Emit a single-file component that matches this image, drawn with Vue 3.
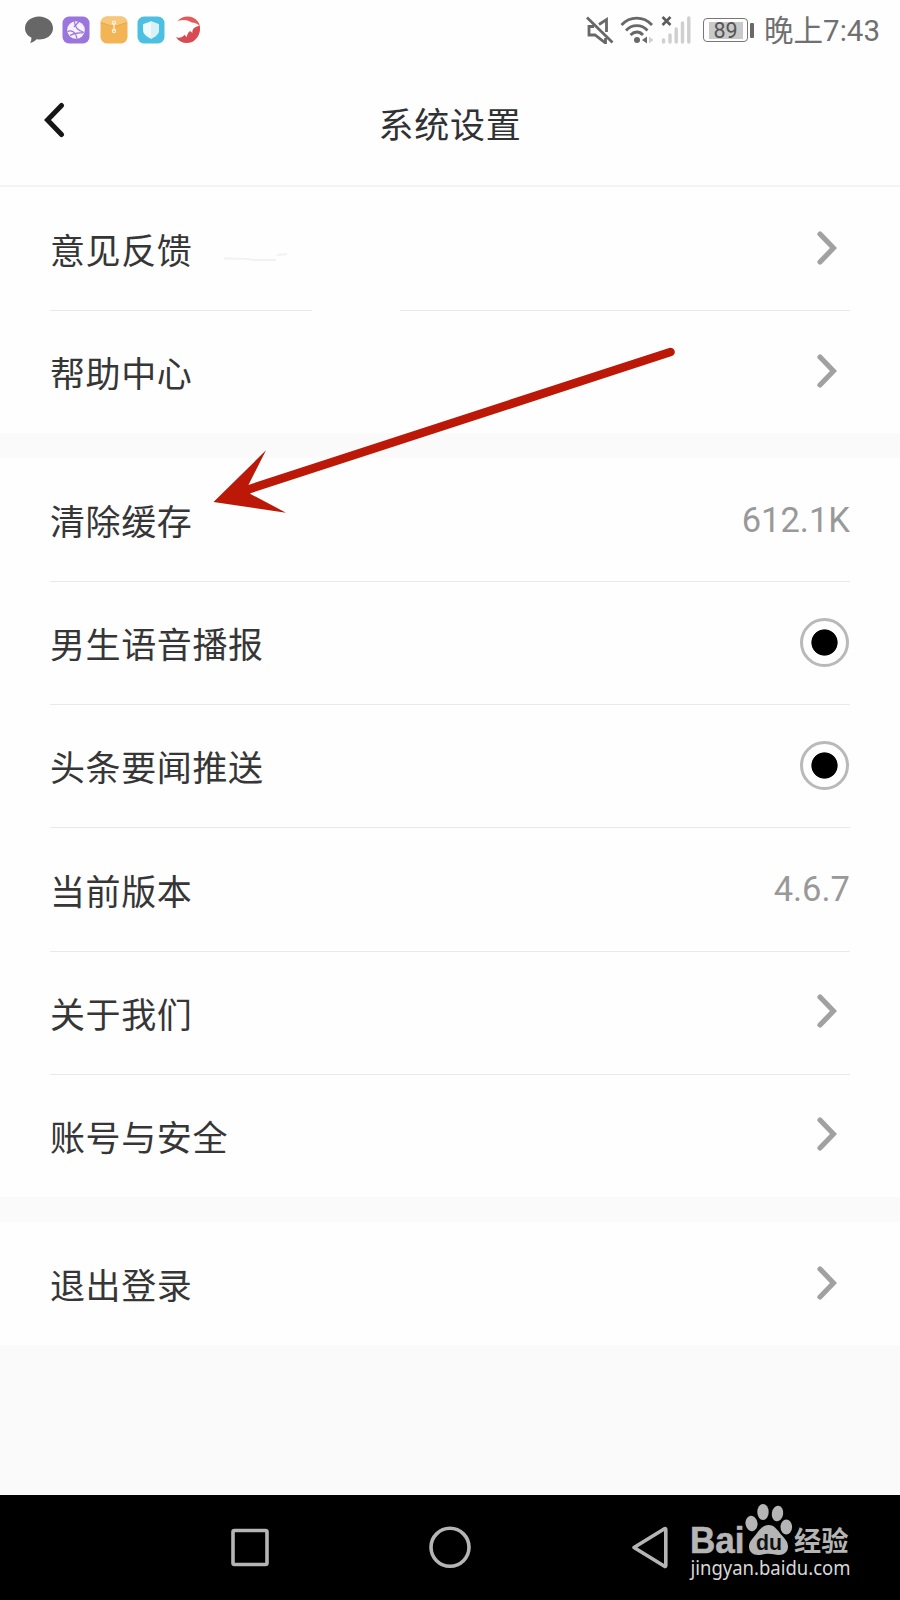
<template>
  <div class="phone">
    <!-- 状态栏 -->
    <div class="status-bar">
      <div class="status-left">
        <svg class="app-icon" width="28" height="28" viewBox="0 0 28 28">
          <path d="M14 .5C21.800 .5 28 5.500 28 12.200S21.800 23.500 14 23.500l-2.500-.2C9.500 25.500 7.500 26.800 5 27c1.200-1.500 1.500-3 1.300-5.400C2.500 19.700 0 16.200 0 12.200 0 5.500 6.200.5 14 .5z" fill="#676767"/>
        </svg>
        <svg class="app-icon" width="28" height="28" viewBox="0 0 28 28">
          <rect x=".5" y=".5" width="27" height="27" rx="6.500" fill="#9a76dc"/>
          <circle cx="14" cy="14" r="8.800" fill="#f6f1fd"/>
          <path d="M12.500 5.500c0 4 2 8.500 9.500 11M5.500 15.500c4-2 8 .5 9.500 7M12 11l5-5.500M8 19.500c3-2 8-3 13-2.500" fill="none" stroke="#9a76dc" stroke-width="1.200"/>
        </svg>
        <svg class="app-icon" width="28" height="28" viewBox="0 0 28 28">
          <rect x=".5" y=".5" width="27" height="27" rx="6.500" fill="#f3b456"/>
          <path d="M1 6C1 3 4 .5 7 .5h14c3 0 6 2.500 6 5.500L17 9.500h-6z" fill="#f7c77b"/>
          <path d="M1 6.500l10 3.500h6l10-3.500" fill="none" stroke="#dfa34d" stroke-width=".7"/>
          <path d="M14 7v8" stroke="#fff0d6" stroke-width="1.300"/>
          <circle cx="14" cy="6.800" r="1.600" fill="none" stroke="#fff0d6" stroke-width="1.200"/>
          <circle cx="14" cy="15" r="1.600" fill="none" stroke="#fff0d6" stroke-width="1.200"/>
        </svg>
        <svg class="app-icon" width="28" height="28" viewBox="0 0 28 28">
          <rect x=".5" y=".5" width="27" height="27" rx="6.500" fill="#4cc0e3"/>
          <path d="M14 5.300l8 3v5.500c0 4.300-3.500 7-8 9-4.500-2-8-4.700-8-9V8.300z" fill="#effaff"/>
          <path d="M14 5.300l8 3v5.500c0 4.300-3.500 7-8 9z" fill="#d8f1f9"/>
        </svg>
        <svg class="app-icon" width="28" height="28" viewBox="0 0 28 28">
          <path d="M3.500 5C9-.8 18-.8 23 4.500c1.500 1.600 2.500 3.300 2.800 5.500-2.600-2.200-4.600-3.300-8-3.400C14 3.500 9 3.200 3.500 5z" fill="#e25a5a"/>
          <path d="M25.800 9.500c1.700 8.500-4 17.300-12.300 17.500-5 .1-9-2-11.500-5.800 4 1.300 6.500-.2 8.500-2.500l2.300 2.500c.2-2.500 1.200-4.500 3.200-6.200l2.500 2c-.5-3 .6-6 7.300-7.500z" fill="#d94b53"/>
        </svg>
      </div>
      <div class="status-right">
        <svg class="mute" width="28" height="28" viewBox="0 0 28 28">
          <path d="M20.500 16V3.500l-7.500 5M8 10.500H3v8.500h6l10.500 8v-5" fill="none" stroke="#686868" stroke-width="2.800"/>
          <path d="M1 1.500l25.500 25" stroke="#686868" stroke-width="2.800"/>
        </svg>
        <svg class="wifi" width="34" height="28" viewBox="0 0 34 28">
          <g fill="none" stroke="#686868" stroke-width="2.800">
            <path d="M1.500 9C10-.2 23.500-.2 32 9"/>
            <path d="M6 14.500c6-6.500 15.500-6.500 21.500 0"/>
            <path d="M10.500 19c4-4 9-4 12.500 0"/>
          </g>
          <circle cx="17" cy="24" r="3" fill="#686868"/>
          <path d="M27 20.500v7L22 24z" fill="#686868"/>
          <path d="M29 20.500v7l4.500-3.500z" fill="#d0d0d0"/>
        </svg>
        <svg class="signal" width="30" height="28" viewBox="0 0 30 28">
          <path d="M1.500 1l8 8M9.500 1l-8 8" stroke="#5d5d5d" stroke-width="2.600"/>
          <g stroke="#cfcfcf" stroke-width="3.400" stroke-linecap="round">
            <path d="M2.500 24v2M9 19v7M15.200 13v13M21.500 7v19M27.800 2v24"/>
          </g>
        </svg>
        <div class="battery"><span>89</span></div>
        <span class="battery-tip"></span>
        <span class="clock">晚上7:43</span>
      </div>
    </div>

    <!-- 标题栏 -->
    <div class="title-bar">
      <svg class="back" width="22" height="36" viewBox="0 0 22 36">
        <path d="M18.500 3.500L4.500 18l14 14.500" fill="none" stroke="#161616" stroke-width="5" stroke-linecap="round"/>
      </svg>
      <h1>系统设置</h1>
    </div>

    <!-- 设置列表 -->
    <div v-for="group in groups" :key="group.id" class="group" :class="group.id">
      <div v-for="item in group.items" :key="item.label" class="row" :class="{ broken: item.broken }">
        <span class="label">{{ item.label }}</span>
        <svg v-if="item.type === 'link'" class="arrow" width="20" height="34" viewBox="0 0 20 34">
          <path d="M3 3l13.500 14L3 31" fill="none" stroke="#a1a1a1" stroke-width="5.200" stroke-linecap="round"/>
        </svg>
        <span v-else-if="item.type === 'radio'" class="radio"></span>
        <span v-else class="value">{{ item.value }}</span>
      </div>
    </div>

    <!-- 红色箭头 -->
    <svg class="pointer" width="900" height="300" viewBox="0 230 900 300">
      <path d="M224 258.500l22 .3 8 1.200h22M277 255l10-1" fill="none" stroke="#f1f1f1" stroke-width="1.800"/>
      <path d="M245 490.500L670.500 352" stroke="#bb1808" stroke-width="8.600" stroke-linecap="round"/>
      <path d="M213.500 502L266 450.300 247.700 486.500 250.500 494 286 512.700z" fill="#bb1808"/>
    </svg>

    <!-- 导航栏 -->
    <div class="nav-bar">
      <svg width="900" height="105" viewBox="0 0 900 105">
        <g fill="none" stroke="#b5b5b5" stroke-width="3.600">
          <rect x="233" y="35.500" width="34" height="34" rx="1.500"/>
          <circle cx="450" cy="52.300" r="19"/>
          <path d="M634 52.500L664.500 33.800q1.300-.5 1.300 1v35.400q0 1.500-1.300 1z" stroke-linejoin="round"/>
        </g>
        <g fill="#b5b5b5">
          <text class="logo" x="690" y="58.300" textLength="54.500" lengthAdjust="spacingAndGlyphs">Bai</text>
          <ellipse cx="751.500" cy="28.500" rx="6" ry="7.800" transform="rotate(-8 751.500 28.500)"/>
          <ellipse cx="763" cy="17" rx="5.700" ry="8"/>
          <ellipse cx="777.500" cy="18.500" rx="5.700" ry="7.800" transform="rotate(8 777.500 18.500)"/>
          <ellipse cx="786.300" cy="32" rx="5.800" ry="7.500"/>
          <path d="M768.500 30c6 0 9 5 13 10 4 4.500 6.500 7 6.500 11.500 0 5.500-4 8.500-9 8.500-4 0-6.500-1.200-10.500-1.200S762 60 758 60c-5 0-9-3-9-8.500 0-4.500 3-7 6.500-11.500 4-5 7-10 13-10z"/>
          <text class="du" x="756" y="55" textLength="26" lengthAdjust="spacingAndGlyphs">du</text>
          <text class="jingyan" x="794" y="56" textLength="54.500" lengthAdjust="spacingAndGlyphs">经验</text>
        </g>
        <text class="url" x="690.500" y="80" textLength="160" lengthAdjust="spacingAndGlyphs">jingyan.baidu.com</text>
      </svg>
    </div>
  </div>
</template>

<script setup>
import { ref } from 'vue'

// 设置项，按分组排列
const groups = ref([
  {
    id: 'help',
    items: [
      { label: '意见反馈', type: 'link', broken: true },
      { label: '帮助中心', type: 'link' },
    ],
  },
  {
    id: 'system',
    items: [
      { label: '清除缓存', type: 'text', value: '612.1K' },
      { label: '男生语音播报', type: 'radio' },
      { label: '头条要闻推送', type: 'radio' },
      { label: '当前版本', type: 'text', value: '4.6.7' },
      { label: '关于我们', type: 'link' },
      { label: '账号与安全', type: 'link' },
    ],
  },
  {
    id: 'logout',
    items: [{ label: '退出登录', type: 'link' }],
  },
])
</script>

<style>
body {
  margin: 0;
}
</style>

<style scoped>
.phone {
  position: relative;
  display: flex;
  flex-direction: column;
  width: 900px;
  height: 1600px;
  overflow: hidden;
  background: #fafafa;
  font-family: Roboto, "Noto Sans CJK SC", sans-serif;
}

.status-bar {
  display: flex;
  justify-content: space-between;
  height: 60px;
  flex: none;
  background: #fefefe;
  box-sizing: border-box;
  padding: 0 20px 0 25px;
}

.status-left,
.status-right {
  display: flex;
  align-items: center;
  height: 60px;
}

.status-left {
  gap: 9.3px;
}

.mute {
  margin-right: 6px;
}

.wifi {
  margin-right: 7px;
}

.signal {
  margin-right: 12px;
}

.battery {
  display: flex;
  align-items: center;
  justify-content: center;
  box-sizing: border-box;
  width: 45px;
  height: 24px;
  padding: 2px;
  border: 1.5px solid #777;
  border-radius: 4px;
}

.battery span {
  width: 34px;
  height: 17px;
  line-height: 18px;
  font-size: 21.5px;
  text-align: center;
  color: #555;
  background: #c9c9c9;
}

.battery-tip {
  width: 4px;
  height: 15px;
  margin: 0 10px 0 2px;
  border-radius: 1px;
  background: #686868;
}

.clock {
  margin-top: 2px;
  font-size: 29.5px;
  line-height: 60px;
  color: #707070;
  white-space: nowrap;
}

.title-bar {
  display: grid;
  grid-template-columns: 100px 1fr 100px;
  align-items: center;
  flex: none;
  box-sizing: border-box;
  height: 127px;
  padding-bottom: 5px;
  border-bottom: 2px solid #f3f3f3;
  background: #fefefe;
}

.back {
  margin-left: 43px;
}

.title-bar h1 {
  margin: 5px 0 0;
  font-size: 35px;
  font-weight: 400;
  letter-spacing: 0.7px;
  text-align: center;
  color: #303133;
}

.group {
  display: grid;
  grid-auto-rows: 1fr;
  flex: none;
  margin-bottom: 25px;
  background: #fefefe;
}

.help {
  height: 246px;
}

.system {
  height: 739px;
}

.logout {
  height: 123px;
  margin-bottom: 0;
}

.row {
  position: relative;
  display: flex;
  align-items: center;
  justify-content: space-between;
  padding: 0 50px;
}

/* 分隔线，盖在两行交界处 */
.row:not(:last-child)::after {
  content: "";
  position: absolute;
  right: 50px;
  bottom: -1px;
  left: 50px;
  height: 1px;
  background: #e9e9e9;
}

.row.broken::after {
  background: linear-gradient(90deg, #e9e9e9 262px, transparent 262px, transparent 350px, #e9e9e9 350px);
}

.label {
  font-size: 35px;
  letter-spacing: 0.6px;
  color: #363636;
}

.value {
  font-size: 34.5px;
  color: #999;
}

.arrow {
  margin: 0 13px 2px 0;
}

.radio {
  box-sizing: border-box;
  width: 49px;
  height: 49px;
  margin: 0 1px 1px 0;
  border: 3px solid #b9b9b9;
  border-radius: 50%;
  background: radial-gradient(circle, #000 12.7px, #fefefe 13.5px);
}

.pointer {
  position: absolute;
  top: 230px;
  left: 0;
}

.nav-bar {
  flex: none;
  height: 105px;
  margin-top: auto;
  background: #000;
}

.nav-bar svg {
  display: block;
}

.logo {
  font: 700 36px "Liberation Sans", sans-serif;
  stroke: #b5b5b5;
  stroke-width: 0.6px;
}

.du {
  font: 700 22px "Liberation Sans", sans-serif;
  fill: #111;
}

.jingyan {
  font: 700 27px "Noto Sans CJK SC", sans-serif;
}

.url {
  font: 19px "Noto Sans", sans-serif;
  fill: #d8d8d8;
}
</style>
